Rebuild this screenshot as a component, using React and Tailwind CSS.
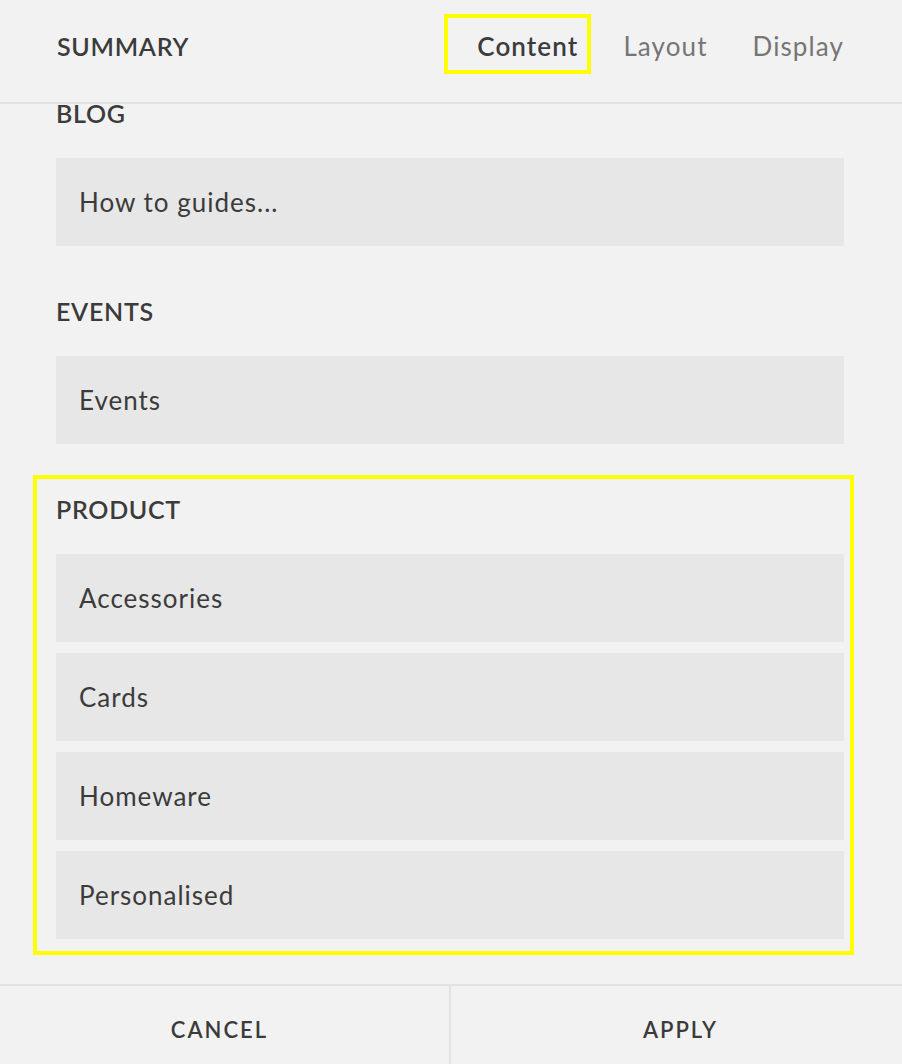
import React from "react"

const sections = [
    { title: "BLOG", items: ["How to guides..."] },
    { title: "EVENTS", items: ["Events"] },
    { title: "PRODUCT", items: ["Accessories", "Cards", "Homeware", "Personalised"], marked: true },
]

function Section({ title, items, marked, first }) {
    return (
        <div className={`relative ${first ? "-mt-[3px]" : "mt-[53px]"}`}>
            {marked && <div className="absolute -left-[23px] -right-[10px] -top-[22px] -bottom-[16px] border-4 border-[#ffff00] pointer-events-none" />}
            <h2 className="text-[25px] leading-[24px] font-semibold tracking-[0.7px] text-[#3b3b3b]">{title}</h2>
            <ul className="mt-[33px] flex flex-col gap-[11px]">
                {items.map(item =>
                    <li key={item} className="h-[88px] bg-[#e7e7e7] flex items-center pl-[23px] text-[26px] tracking-[1px] text-[#3b3b3b]">
                        {item}
                    </li>
                )}
            </ul>
        </div>
    )
}

export default function App() {
    return (
        <div className="h-[1064px] flex flex-col bg-[#f2f2f2] overflow-hidden" style={{ fontFamily: "Lato, 'Open Sans', sans-serif" }}>
            <header className="h-[104px] shrink-0 flex items-center justify-between pl-[57px] pr-[58px] border-b-2 border-[#e3e3e3] relative z-10 bg-[#f2f2f2]">
                <h1 className="text-[25px] leading-[24px] font-semibold tracking-[0.7px] text-[#3b3b3b] mt-[-10px]">SUMMARY</h1>
                <nav className="flex gap-[45px] text-[26px] leading-[24px] tracking-[1.1px] mt-[-10px]">
                    <span className="relative font-semibold text-[#3b3b3b]">
                        <span className="absolute -left-[33px] -right-[13px] -top-[20px] -bottom-[16px] border-4 border-[#ffff00]" />
                        Content
                    </span>
                    <span className="text-[#757575]">Layout</span>
                    <span className="text-[#757575]">Display</span>
                </nav>
            </header>
            <main className="flex-1 pl-[56px] pr-[58px]">
                {sections.map((s, i) => <Section key={s.title} {...s} first={i === 0} />)}
            </main>
            <footer className="h-[80px] shrink-0 grid grid-cols-2 border-t-2 border-[#e3e3e3] text-[22px] font-semibold tracking-[2px] text-[#3b3b3b]">
                <button className="flex items-center justify-center border-r-2 border-[#e3e3e3] pt-[8px] pr-[10px]">CANCEL</button>
                <button className="flex items-center justify-center pt-[8px] pl-[8px]">APPLY</button>
            </footer>
        </div>
    )
}
